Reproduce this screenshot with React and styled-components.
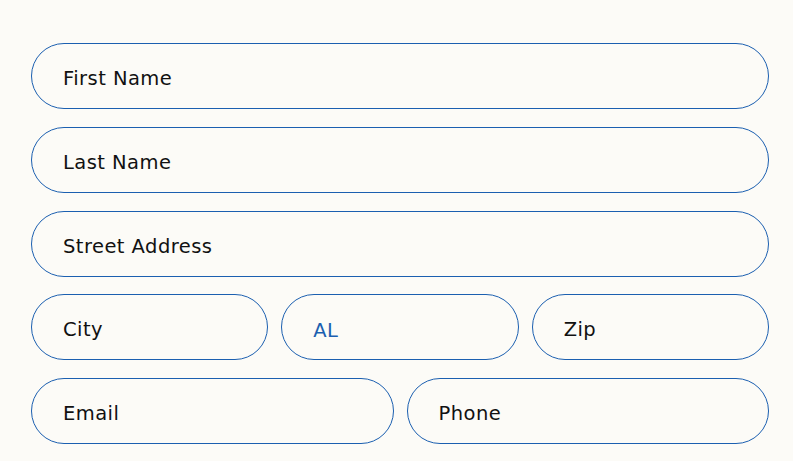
import React from 'react';
import styled, { createGlobalStyle } from 'styled-components';

const GlobalStyle = createGlobalStyle`
    html, body {
        margin: 0;
        padding: 0;
        background-color: #FCFBF7;
    }
    body {
        font-family: "DejaVu Sans", "Noto Sans", sans-serif;
    }
`

const App = () => {
    return(
        <>
            <GlobalStyle />
            <StyledForm onSubmit={(e) => e.preventDefault()}>
                <Field placeholder="First Name" />
                <Field placeholder="Last Name" />
                <Field placeholder="Street Address" />
                <Row cols={3}>
                    <Field placeholder="City" />
                    <Select defaultValue="AL">
                        <option value="AL">AL</option>
                        <option value="AK">AK</option>
                        <option value="AZ">AZ</option>
                    </Select>
                    <Field placeholder="Zip" />
                </Row>
                <Row cols={2}>
                    <Field placeholder="Email" type="email" />
                    <Field placeholder="Phone" type="tel" />
                </Row>
            </StyledForm>
        </>
    );
}

const StyledForm = styled.form`
    box-sizing: border-box;
    width: 793px;
    padding: 43px 24px 18px 31px;
    display: grid;
    row-gap: 17.75px;
`

const Row = styled.div`
    display: grid;
    grid-template-columns: repeat(${props => props.cols}, 1fr);
    column-gap: 13px;
`

const Field = styled.input`
    box-sizing: border-box;
    width: 100%;
    height: 66px;
    margin: 0;
    padding: 5px 20px 0 31px;
    border: 1px solid #1B5FB0;
    border-radius: 33px;
    background: transparent;
    font-family: "DejaVu Sans", "Noto Sans", sans-serif;
    font-size: 19.5px;
    letter-spacing: 0.45px;
    color: #111;
    outline: none;
    &::placeholder{
        color: #111;
        opacity: 1;
    }
`

const Select = styled.select`
    box-sizing: border-box;
    width: 100%;
    height: 66px;
    margin: 0;
    padding: 6px 20px 0 31px;
    border: 1px solid #1B5FB0;
    border-radius: 33px;
    background: transparent;
    appearance: none;
    font-family: "DejaVu Sans", "Noto Sans", sans-serif;
    font-size: 19.5px;
    letter-spacing: 0.45px;
    color: #1B5FB0;
    outline: none;
`

export default App;
